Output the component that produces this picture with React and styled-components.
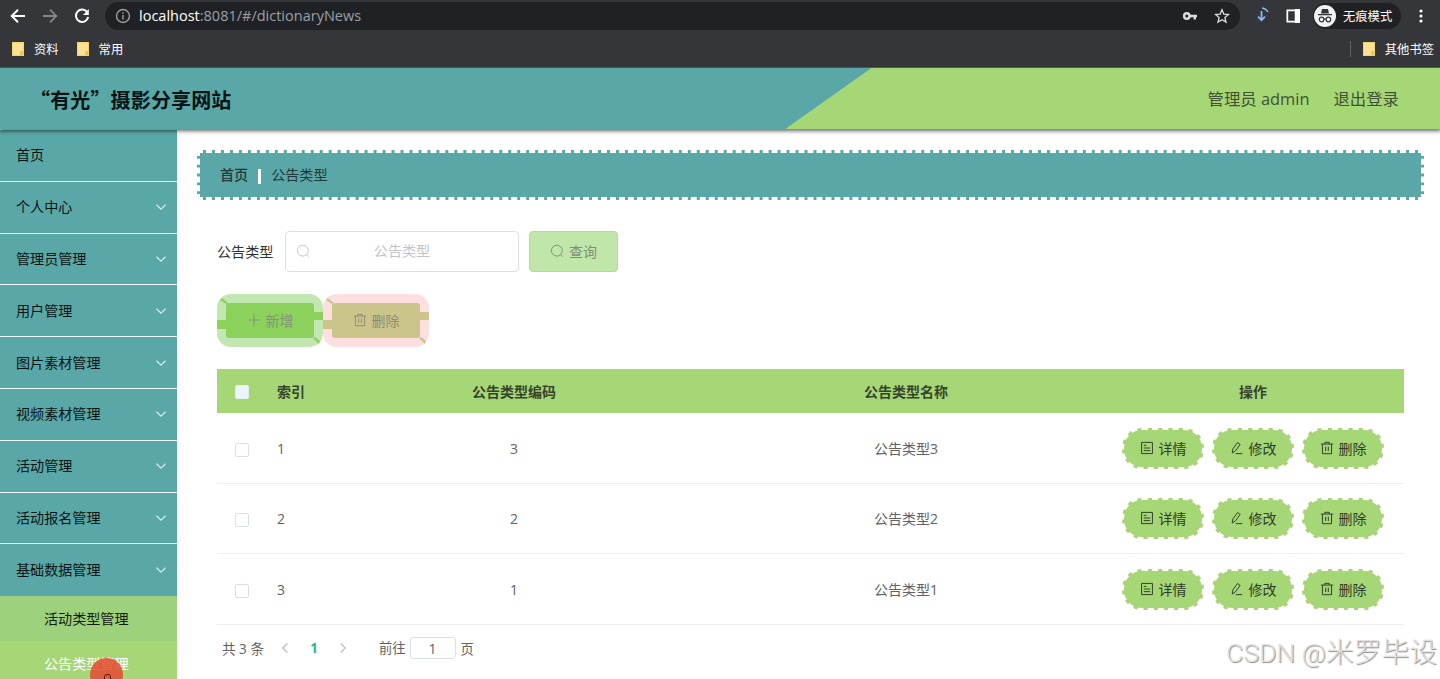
import { useState } from "react";
import styled, { createGlobalStyle, css } from "styled-components";

const GlobalStyle = createGlobalStyle`
* {
    box-sizing: border-box;
}
body {
    margin: 0;
    overflow: hidden;
    background: #fff;
    font-family: "Open Sans", "Noto Sans CJK SC", sans-serif;
    font-size: 14px;
}
button, input {
    font-family: inherit;
    margin: 0;
}
svg {
    display: block;
    flex: none;
}
`

const Page = styled.div`
position: relative;
width: 1440px;
height: 679px;
overflow: hidden;
display: flex;
flex-direction: column;
`

/* browser */
const Browser = styled.div`
position: relative;
z-index: 2;
height: 68px;
flex: none;
background: #35363a;
border-bottom: 1px solid #4a5a5c;
color: #fff;
`

const Toolbar = styled.div`
height: 32px;
display: flex;
align-items: center;
padding: 0 13px 0 10px;
`

const NavIcons = styled.div`
display: flex;
gap: 16px;
width: 95px;
`

const AddressBar = styled.div`
width: 1135px;
height: 28px;
border-radius: 14px;
background: #202124;
display: flex;
align-items: center;
padding: 0 10px 0 10px;
font-size: 14.5px;
color: #9aa0a6;

span {
    color: #fff;
}
.url {
    flex: 1;
    padding: 0 0 1px 8px;
    white-space: nowrap;
}
`

const AddressIcons = styled.div`
display: flex;
gap: 16px;
`

const ToolIcons = styled.div`
display: flex;
align-items: center;
padding-left: 13px;
gap: 15px;
`

const Incognito = styled.div`
display: flex;
align-items: center;
height: 26px;
width: 88px;
border-radius: 13px;
background: #202124;
font-size: 12.3px;
gap: 7px;
padding-left: 1px;
margin: 0 3px 0 -2px;
white-space: nowrap;
`

const Bookmarks = styled.div`
height: 34px;
display: flex;
align-items: center;
padding: 0 6px 0 12px;
font-size: 12.3px;
`

const Bookmark = styled.div`
display: flex;
align-items: center;
gap: 10px;
margin-right: ${p => p.$last ? "0" : "18px"};
white-space: nowrap;
`

const Folder = styled.i`
width: 12px;
height: 14px;
background: linear-gradient(#f0c644, #f0c644) right bottom / 3px 4px no-repeat #fde293;
border: 1px solid #f3d36b;
`

const Divider = styled.i`
width: 1px;
height: 16px;
background: #5f6368;
margin: 0 12px 0 auto;
`

/* header */
const Header = styled.div`
height: 61px;
flex: none;
position: relative;
z-index: 1;
display: flex;
align-items: center;
justify-content: space-between;
padding: 0 41px 0 30px;
background: linear-gradient(144.7deg, #5aa7a7 57.05%, #a6d777 57.15%);
box-shadow: 0 1px 4px 1px rgba(0, 0, 0, .6);
`

const Title = styled.div`
font-family: "Noto Sans CJK SC", sans-serif;
font-size: 20px;
font-weight: 700;
color: #081414;
padding-top: 1px;
letter-spacing: .15px;
`

const User = styled.div`
display: flex;
gap: 24px;
padding-bottom: 2px;
font-size: 16.4px;
color: #3f5231;
`

const Body = styled.div`
flex: 1;
display: flex;
min-height: 0;
padding-top: 1px;
`

const Sidebar = styled.div`
width: 177px;
flex: none;
background: #5aa7a7;
`

const MenuItem = styled.div`
height: 51.8px;
display: flex;
align-items: center;
justify-content: space-between;
padding: 0 10px 2px 16px;
border-bottom: ${p => p.$open ? "none" : "1px solid #eef8f8"};
font-size: 14.1px;
color: #0a1414;

svg {
    margin-top: 2px;
}
`

const SubItem = styled.div`
height: 45px;
display: flex;
align-items: center;
padding: 0 0 2px 44px;
font-size: 14.1px;
background: ${p => p.$active ? "#a6d777" : "#9ed17b"};
color: ${p => p.$active ? "#fff" : "#101c0c"};
`

const Cursor = styled.i`
position: absolute;
left: 90px;
top: 658px;
width: 33px;
height: 33px;
border-radius: 50%;
background: rgba(232, 72, 48, .85);

&::after {
    content: "";
    position: absolute;
    left: 14px;
    top: 16px;
    width: 5px;
    height: 12px;
    border: 1px solid #4b1f18;
    border-radius: 3px;
}
`

const Main = styled.div`
flex: 1;
padding: 20px 16px 0 20px;
`

const Breadcrumb = styled.div`
height: 50px;
border: 3px dashed #fff;
background: #5aa7a7;
display: flex;
align-items: center;
padding: 0 0 2px 20px;
font-size: 14.1px;
color: #22383a;
b {
    font-weight: 500;
}
i {
    width: 3px;
    height: 15px;
    background: #fff;
    margin: 4px 10px 0;
}
`

const Content = styled.div`
padding: 31px 20px 0 20px;
`

const SearchForm = styled.div`
display: flex;
align-items: center;
color: #303133;

> span {
    width: 57px;
    font-size: 14.1px;
    padding-bottom: 2px;
    white-space: nowrap;
}
`

const SearchBox = styled.label`
width: 234px;
height: 41px;
margin: 0 10px 0 11px;
border: 1px solid #dcdfe6;
border-radius: 4px;
display: flex;
align-items: center;
padding: 0 10px 2px;
color: #c0c4cc;

input {
    width: 100%;
    border: none;
    outline: none;
    background: none;
    text-align: center;
    font-size: 14.1px;
    padding: 0 14px 0 0;
}
input::placeholder {
    color: #c0c4cc;
}
`

const SearchButton = styled.button`
width: 89px;
height: 41px;
border: 1px solid #afdc98;
border-radius: 4px;
background: #c0e6aa;
color: #7f8f76;
font-size: 14px;
display: flex;
align-items: center;
justify-content: center;
gap: 5px;
padding: 0 0 2px;
`

const Actions = styled.div`
display: flex;
padding-top: 22px;
`

const ActionButton = styled.button`
position: relative;
width: 106px;
height: 53px;
border: none;
padding: 0 0 2px;
background: none;
color: ${p => p.$color};
font-size: 14px;

> svg {
    position: absolute;
    left: 0;
    top: 0;
}
span {
    position: relative;
    display: flex;
    align-items: center;
    justify-content: center;
    gap: 5px;
}
`

const Table = styled.div`
margin-top: 22px;
color: #606266;
`

const grid = css`
display: grid;
grid-template-columns: 50px 51px 392px 392px 302px;
align-items: center;
text-align: center;
`

const TableHead = styled.div`
${grid}
height: 44px;
background: #a6d777;
color: #36432c;
font-weight: 700;
`

const TableRow = styled.div`
${grid}
height: ${p => p.$height}px;
border-bottom: 1px solid #ebeef5;
`

const IndexCell = styled.div`
text-align: left;
padding-left: 10px;
white-space: nowrap;
`

const NameCell = styled.div`
padding-bottom: 1px;
`

const Check = styled.i`
width: 14px;
height: 14px;
border: 1px solid ${p => p.$head ? "#e4eef5" : "#dcdfe6"};
border-radius: 2px;
background: ${p => p.$head ? "#eef4fc" : "#fff"};
justify-self: center;
margin-top: ${p => p.$head ? "1px" : "3px"};
`

const Ops = styled.div`
display: flex;
justify-content: center;
gap: 8px;
`

const RowButton = styled.button`
width: 82px;
height: 41px;
border: 2px dashed #fff;
border-radius: 20px;
background: linear-gradient(#a6d777, #a6d777) padding-box, #b0cd7b border-box;
color: #2f3c26;
font-size: 14px;
padding: 0 0 1px;
display: flex;
align-items: center;
justify-content: center;
gap: 5px;
`

const Pagination = styled.div`
display: flex;
align-items: center;
height: 28px;
padding: 0 5px;
margin-top: 9px;
font-size: 13.3px;
color: #606266;
white-space: nowrap;

svg {
    color: #b4b8c0;
}
b {
    width: 30px;
    margin: 0 8px;
    text-align: center;
    color: #21b98a;
}
`

const Total = styled.div`
width: 57px;
padding-bottom: 1px;
font-size: 13.6px;
`

const Jump = styled.div`
margin-left: 30px;
padding-bottom: 1px;
`

const PageInput = styled.input`
width: 46px;
height: 22px;
border: 1px solid #dcdfe6;
border-radius: 3px;
text-align: center;
color: #606266;
font-size: 14px;
margin: 0 5px 0 4px;
padding: 0;
`

const Watermark = styled.div`
position: absolute;
right: 3px;
top: 635px;
line-height: 36px;
font-family: Roboto, "Noto Sans CJK SC", sans-serif;
font-size: 27.8px;
font-weight: 300;
color: rgba(225, 225, 225, .95);
text-shadow: 1px 1px 1px #8c8c8c;
white-space: nowrap;

span {
    font-size: 26.5px;
}
`

function Icon({ size = 14, box = 16, width = 1.2, children }) {
    return (
        <svg width={size} height={size} viewBox={`0 0 ${box} ${box}`} fill="none" stroke="currentColor" strokeWidth={width}>
            {children}
        </svg>
    )
}

const SearchIcon = ({ size = 14 }) => <Icon size={size} width={1.1}><circle cx="7.8" cy="7.6" r="6.2" /><path d="M12 12l2.5 2.5" /></Icon>
const TrashIcon = () => <Icon width={1.1}><path d="M1 3.5h14M5.5 3.5v-2h5v2M2.8 3.5v11h10.4v-11M6.5 6.5v5M9.5 6.5v5" /></Icon>
const PlusIcon = () => <Icon><path d="M8 1.5v13M1.5 8h13" /></Icon>
const EditIcon = () => <Icon width={1.1}><path d="M3.3 9L8.6 1.8l3 2.1-5.3 7.3-3.8 2.6zM6.5 14.4H14" /></Icon>
const DetailIcon = () => <Icon width={1.1}><path d="M1.8 1.6h12.4v12.8H1.8zM4.3 5h3M4.3 8h7.4M4.3 11h7.4" /></Icon>

const Arrow = ({ d }) => <Icon size={12} width={1.5}><path d={d} /></Icon>

function Action({ ring, fill, color, children }) {
    return (
        <ActionButton $color={color}>
            <svg width="106" height="53">
                <rect width="106" height="53" rx="14" fill={ring} />
                <rect x="9" y="9" width="88" height="35" rx="3" fill={fill} />
                <path d="M0 26h9v9H0zM97 18h9v8h-9zM3 6l2-2 6 5-2 1zM96 44l2-1 5 4-1 3z" fill={fill} />
            </svg>
            <span>{children}</span>
        </ActionButton>
    )
}

const menus = ["首页", "个人中心", "管理员管理", "用户管理", "图片素材管理", "视频素材管理", "活动管理", "活动报名管理", "基础数据管理"]

const rows = [
    { id: 1, code: 3, name: "公告类型3", height: 71 },
    { id: 2, code: 2, name: "公告类型2", height: 70 },
    { id: 3, code: 1, name: "公告类型1", height: 71 },
]

export default function App() {
    const [busca, setBusca] = useState("");
    const [pagina, setPagina] = useState("1");

    return (
        <Page>
            <GlobalStyle />
            <Browser>
                <Toolbar>
                    <NavIcons>
                        <Icon size={16} width={2}><path d="M15 8H2M8 1.7L1.7 8 8 14.3" /></Icon>
                        <Icon size={16} width={1.8}><path stroke="#85868a" d="M1 8h13M8 1.7L14.3 8 8 14.3" /></Icon>
                        <Icon size={16} width={2}><path d="M13.3 4.3A6.2 6.2 0 1 0 14.2 9" /><path d="M14.8 1v6H9z" fill="currentColor" stroke="none" /></Icon>
                    </NavIcons>
                    <AddressBar>
                        <Icon size={16} width={1.4}><circle cx="8" cy="8" r="6.5" /><path d="M8 7v4.5M8 4.3v1.5" /></Icon>
                        <div className="url"><span>localhost</span>:8081/#/dictionaryNews</div>
                        <AddressIcons>
                            <Icon size={16} width={2.4}><g stroke="#dadce0"><circle cx="4.8" cy="8" r="2.7" /><path d="M7.5 8H15M12.8 8v3.4" /></g></Icon>
                            <Icon size={16} width={1.3}><path stroke="#dadce0" d="M8 1.8l1.8 4.3 4.7.4-3.6 3 1.1 4.6L8 11.7l-4 2.4 1.1-4.6-3.6-3 4.7-.4z" /></Icon>
                        </AddressIcons>
                    </AddressBar>
                    <ToolIcons>
                        <Icon size={18} box={18} width={1.8}><g stroke="#8ab4f8"><path d="M8.5 4v9M5 9.7l3.5 3.5L12 9.7" /><path d="M9 1a8 8 0 0 1 6 4" strokeWidth="1.3" /></g></Icon>
                        <Icon size={14} width={2}><path d="M1.5 1.5h13v13h-13z" /><path d="M11 1h4v14h-4z" fill="currentColor" /></Icon>
                        <Incognito>
                            <svg width="22" height="22" viewBox="0 0 22 22">
                                <circle cx="11" cy="11" r="11" fill="#f1f3f4" />
                                <path d="M7 8.5L8 4h6l1 4.5zM4 9h14v1.3H4z" fill="#35363a" />
                                <g fill="none" stroke="#35363a" strokeWidth="1.2"><circle cx="7.6" cy="14.5" r="2.3" /><circle cx="14.4" cy="14.5" r="2.3" /><path d="M9.9 14h2.2" /></g>
                            </svg>
                            无痕模式
                        </Incognito>
                        <svg width="4" height="16" fill="#fff"><circle cx="2" cy="3" r="1.6" /><circle cx="2" cy="8" r="1.6" /><circle cx="2" cy="13" r="1.6" /></svg>
                    </ToolIcons>
                </Toolbar>
                <Bookmarks>
                    <Bookmark><Folder />资料</Bookmark>
                    <Bookmark><Folder />常用</Bookmark>
                    <Divider />
                    <Bookmark $last><Folder />其他书签</Bookmark>
                </Bookmarks>
            </Browser>
            <Header>
                <Title>“有光”摄影分享网站</Title>
                <User>
                    <div>管理员 admin</div>
                    <div>退出登录</div>
                </User>
            </Header>
            <Body>
                <Sidebar>
                    {menus.map((menu, i) =>
                        <MenuItem key={menu} $open={i === menus.length - 1}>
                            {menu}
                            {i > 0 && <Icon size={12} width={1.6}><path stroke="#d5ecec" d="M2 5l6 6 6-6" /></Icon>}
                        </MenuItem>
                    )}
                    <SubItem>活动类型管理</SubItem>
                    <SubItem $active>公告类型管理</SubItem>
                </Sidebar>
                <Main>
                    <Breadcrumb><b>首页</b><i />公告类型</Breadcrumb>
                    <Content>
                        <SearchForm>
                            <span>公告类型</span>
                            <SearchBox>
                                <SearchIcon />
                                <input placeholder="公告类型" value={busca} onChange={e => setBusca(e.target.value)} />
                            </SearchBox>
                            <SearchButton><SearchIcon />查询</SearchButton>
                        </SearchForm>
                        <Actions>
                            <Action ring="#c2e7b0" fill="#8bd15c" color="#84957a"><PlusIcon />新增</Action>
                            <Action ring="#fddfe0" fill="#cbc58c" color="#8f8c72"><TrashIcon />删除</Action>
                        </Actions>
                        <Table>
                            <TableHead>
                                <Check $head />
                                <IndexCell>索引</IndexCell>
                                <div>公告类型编码</div>
                                <div>公告类型名称</div>
                                <div>操作</div>
                            </TableHead>
                            {rows.map(row =>
                                <TableRow key={row.id} $height={row.height}>
                                    <Check />
                                    <IndexCell>{row.id}</IndexCell>
                                    <div>{row.code}</div>
                                    <NameCell>{row.name}</NameCell>
                                    <Ops>
                                        <RowButton><DetailIcon />详情</RowButton>
                                        <RowButton><EditIcon />修改</RowButton>
                                        <RowButton><TrashIcon />删除</RowButton>
                                    </Ops>
                                </TableRow>
                            )}
                        </Table>
                        <Pagination>
                            <Total>共 3 条</Total>
                            <Arrow d="M11 2L5 8l6 6" />
                            <b>1</b>
                            <Arrow d="M5 2l6 6-6 6" />
                            <Jump>前往</Jump>
                            <PageInput value={pagina} onChange={e => setPagina(e.target.value)} />
                            页
                        </Pagination>
                    </Content>
                </Main>
            </Body>
            <Cursor />
            <Watermark><span>CSDN @</span>米罗毕设</Watermark>
        </Page>
    )
}
